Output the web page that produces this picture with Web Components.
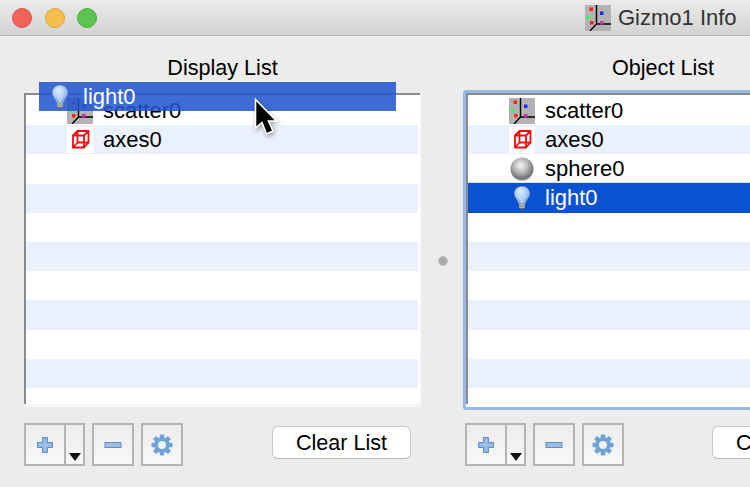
<!DOCTYPE html>
<html>
<head>
<meta charset="utf-8">
<title>Gizmo1 Info</title>
<style>
html, body { margin: 0; padding: 0; width: 750px; height: 487px; overflow: hidden; background: #ececec; }
body { font-family: "Liberation Sans", Arial, sans-serif; font-size: 21.6px; color: #000; }
</style>
</head>
<body>
<gizmo-window></gizmo-window>
<script>
const html = String.raw;

const ICONS = {
    scatter: html`<svg width="26" height="26" viewBox="0 0 26 26">
        <rect width="26" height="26" fill="#b3b3b3"/>
        <path d="M11.500 0V19H26M11.500 19L5 26" fill="none" stroke="#000" stroke-width="1.400"/>
        <rect x="4.500" y="2.500" width="3.500" height="3.500" fill="#f5241f"/>
        <rect x="1.500" y="11" width="3.500" height="3.500" fill="#3df25a"/>
        <rect x="5" y="16" width="3.500" height="3.500" fill="#f5241f"/>
        <rect x="15" y="6.500" width="3.500" height="3.500" fill="#1c2cf0"/>
        <rect x="15" y="16" width="3.500" height="3.500" fill="#c92fb4"/>
    </svg>`,
    axes: html`<svg width="26" height="26" viewBox="0 0 26 26">
        <rect width="26" height="26" fill="#fff"/>
        <path d="M6 8.500H17V20.500H6ZM10.500 4H21.500V15.500H10.500ZM6 8.500L10.500 4M17 8.500L21.500 4M17 20.500L21.500 15.500M6 20.500L10.500 15.500" fill="none" stroke="#f20d0d" stroke-width="1.800"/>
    </svg>`,
    sphere: html`<svg width="26" height="26" viewBox="0 0 26 26">
        <defs><radialGradient id="s" cx="0.45" cy="0.35" r="0.65">
            <stop offset="0" stop-color="#f6f6f6"/>
            <stop offset="0.45" stop-color="#bcbcbc"/>
            <stop offset="0.85" stop-color="#777"/>
            <stop offset="1" stop-color="#8c8c8c"/>
        </radialGradient></defs>
        <circle cx="13" cy="13" r="11.500" fill="url(#s)"/>
    </svg>`,
    light: html`<svg width="26" height="26" viewBox="0 0 26 26">
        <defs><radialGradient id="b" cx="0.4" cy="0.3" r="0.75">
            <stop offset="0" stop-color="#e4effc"/>
            <stop offset="0.6" stop-color="#a5c8f2"/>
            <stop offset="1" stop-color="#6d9fdc"/>
        </radialGradient></defs>
        <path d="M13 1.500C8.300 1.500 5.500 4.800 5.500 8.500C5.500 12 8.500 14 9.800 18.500H16.200C17.500 14 20.500 12 20.500 8.500C20.500 4.800 17.700 1.500 13 1.500Z" fill="url(#b)" stroke="#8fb4e2" stroke-width="0.600"/>
        <path d="M10.500 11L13 18M15.500 11L13 18" stroke="#d9e8fa" stroke-width="0.800" fill="none"/>
        <rect x="10" y="18.500" width="6" height="4.500" rx="1" fill="#b9bcae"/>
        <path d="M10 20H16M10 21.500H16" stroke="#85887c" stroke-width="0.600"/>
        <rect x="11.500" y="23" width="3" height="1.500" fill="#6f7167"/>
    </svg>`
};

const GLYPHS = {
    plus: html`<svg width="18" height="18" viewBox="0 0 18 18">
        <path d="M6.500 1.500H11.500V6.500H16.500V11.500H11.500V16.500H6.500V11.500H1.500V6.500H6.500Z" fill="#8fb5e0" stroke="#5f8fc8" stroke-width="1"/>
        <path d="M9 3V15M3 9H15" stroke="#a9c8ea" stroke-width="1"/>
    </svg>`,
    minus: html`<svg width="18" height="18" viewBox="0 0 18 18">
        <rect x="1" y="6.500" width="16" height="5" fill="#9dbfe6" stroke="#5f8fc8" stroke-width="1"/>
    </svg>`,
    gear: html`<svg width="22" height="22" viewBox="0 0 22 22">
        <g fill="#6ea3d8">
            <rect x="8.800" y="0.500" width="4.400" height="21" rx="0.800"/>
            <rect x="8.800" y="0.500" width="4.400" height="21" rx="0.800" transform="rotate(45 11 11)"/>
            <rect x="8.800" y="0.500" width="4.400" height="21" rx="0.800" transform="rotate(90 11 11)"/>
            <rect x="8.800" y="0.500" width="4.400" height="21" rx="0.800" transform="rotate(135 11 11)"/>
            <circle cx="11" cy="11" r="7.800"/>
        </g>
        <circle cx="11" cy="11" r="4" fill="#f0f0f0"/>
    </svg>`
};

class ObjectIcon extends HTMLElement {
    constructor() {
        super();
        const shadow = this.attachShadow({mode: 'open'});
        shadow.innerHTML = html`
            <style>
                :host { display: block; width: 26px; height: 26px; flex: none; }
                svg { display: block; }
            </style>
            ${ICONS[this.getAttribute("name")]}`;
    }
}
customElements.define('object-icon', ObjectIcon);

class ListRow extends HTMLElement {
    constructor() {
        super();
        const shadow = this.attachShadow({mode: 'open'});
        shadow.innerHTML = html`
            <style>
                :host {
                    display: flex; align-items: center; gap: 10px;
                    box-sizing: border-box; height: 29.2px;
                    padding-left: 41px; background: #fff; color: #000;
                    font-size: 22px;
                }
                :host([tint]) { background: #ebf1fc; }
                :host([selected]) {
                    background: #0b52d0; color: #fff;
                    margin-top: -1px; height: 30.2px;
                    box-shadow: 0 1px 0 #d5e2f7, 0 -1px 0 #d5e2f7;
                }
                span { line-height: 26px; }
            </style>
            <slot name="icon"></slot><span><slot></slot></span>`;
    }
}
customElements.define('list-row', ListRow);

class ObjectList extends HTMLElement {
    constructor() {
        super();
        const shadow = this.attachShadow({mode: 'open'});
        shadow.innerHTML = html`
            <style>
                :host {
                    display: block; box-sizing: border-box; height: 314px;
                    background: #f6f6f6; overflow: hidden;
                }
                :host([focused]) {
                    height: 320px; margin: -3px 0;
                    border: 3px solid #96b8ea; border-radius: 3px;
                    background: #fff;
                }
                .inner {
                    box-sizing: border-box; height: 311px; margin-right: 1px;
                    padding: 1px 2px 0 0; overflow: hidden; background: #fff;
                    border-top: 2px solid #8a8a8a; border-left: 2px solid #8a8a8a;
                }
                :host([focused]) .inner { margin: 0; padding-right: 0; }
            </style>
            <div class="inner"><slot></slot></div>`;
    }
}
customElements.define('object-list', ObjectList);

class ToolButton extends HTMLElement {
    constructor() {
        super();
        const shadow = this.attachShadow({mode: 'open'});
        const glyph = this.getAttribute("glyph");
        shadow.innerHTML = html`
            <style>
                :host {
                    display: flex; box-sizing: border-box; height: 43px;
                    width: 42px; flex: none;
                    align-items: center; justify-content: center;
                    border: 2px solid #b4b4b4;
                    background: linear-gradient(#ececec, #f8f8f8);
                }
                svg { display: block; }
            </style>
            ${GLYPHS[glyph]}`;
    }
}
customElements.define('tool-button', ToolButton);

class AddButton extends HTMLElement {
    constructor() {
        super();
        const shadow = this.attachShadow({mode: 'open'});
        shadow.innerHTML = html`
            <style>
                :host {
                    display: flex; box-sizing: border-box; height: 43px; width: 61px; flex: none;
                    border: 2px solid #b4b4b4;
                    background: linear-gradient(#ececec, #f8f8f8);
                }
                .main { width: 38px; display: flex; align-items: center; justify-content: center; border-right: 2px solid #b4b4b4; }
                .drop { flex: 1; display: flex; align-items: flex-end; justify-content: center; padding-bottom: 3px; }
                .tri { width: 0; height: 0; border: 6px solid transparent; border-top: 8px solid #111; border-bottom: 0; }
                svg { display: block; }
            </style>
            <div class="main">${GLYPHS.plus}</div>
            <div class="drop"><div class="tri"></div></div>`;
    }
}
customElements.define('add-button', AddButton);

class PushButton extends HTMLElement {
    constructor() {
        super();
        const shadow = this.attachShadow({mode: 'open'});
        shadow.innerHTML = html`
            <style>
                :host {
                    display: flex; box-sizing: border-box; width: 139px; height: 33px; flex: none;
                    align-items: center; justify-content: center;
                    background: #fff; border: 1px solid #c8c8c8; border-bottom-color: #b8b8b8;
                    border-radius: 6px; white-space: nowrap;
                }
            </style>
            <slot></slot>`;
    }
}
customElements.define('push-button', PushButton);

class ListPanel extends HTMLElement {
    constructor() {
        super();
        const shadow = this.attachShadow({mode: 'open'});
        shadow.innerHTML = html`
            <style>
                :host { display: block; width: 397px; flex: none; }
                h2 {
                    margin: 0 0 13px; font: inherit; height: 24px; line-height: 24px;
                    text-align: center; white-space: nowrap;
                }
                .tools { display: flex; align-items: flex-start; gap: 7px; margin-top: 16px; }
                push-button { margin: 3px 0 0 82px; }
                :host([right]) h2 { padding-left: 3px; }
                :host([right]) .tools { padding-left: 2px; }
                :host([right]) push-button { margin-left: 81px; }
            </style>
            <h2>${this.getAttribute("title")}</h2>
            <slot></slot>
            <div class="tools">
                <add-button></add-button>
                <tool-button glyph="minus"></tool-button>
                <tool-button glyph="gear"></tool-button>
                <push-button>Clear List</push-button>
            </div>`;
    }
}
customElements.define('list-panel', ListPanel);

class TitleBar extends HTMLElement {
    constructor() {
        super();
        const shadow = this.attachShadow({mode: 'open'});
        shadow.innerHTML = html`
            <style>
                :host {
                    display: flex; align-items: center; box-sizing: border-box;
                    height: 36px; padding: 0 0 0 12px;
                    background: linear-gradient(#ebebeb, #d3d3d3);
                    border-bottom: 1px solid #b4b4b4;
                }
                .light { width: 20px; height: 20px; box-sizing: border-box; border-radius: 50%; margin-right: 12.500px; }
                .red { background: #f0625a; border: 1px solid #dd4f48; }
                .yellow { background: #f6bd4f; border: 1px solid #dfa43a; }
                .green { background: #5cc451; border: 1px solid #4cae42; }
                .title { margin-left: auto; display: flex; align-items: center; gap: 7px; color: #333; width: 165px; flex: none; font-size: 22px; white-space: nowrap; }
            </style>
            <div class="light red"></div>
            <div class="light yellow"></div>
            <div class="light green"></div>
            <div class="title"><object-icon name="scatter"></object-icon><slot></slot></div>`;
    }
}
customElements.define('title-bar', TitleBar);

class GizmoWindow extends HTMLElement {
    constructor() {
        super();
        const shadow = this.attachShadow({mode: 'open'});
        shadow.innerHTML = html`
            <style>
                :host { display: block; position: relative; width: 750px; height: 487px; overflow: hidden; }
                .body { display: flex; padding: 20px 0 0 24px; width: 900px; }
                .split { width: 42px; flex: none; display: flex; align-items: center; justify-content: center; height: 410px; padding-left: 2px; box-sizing: border-box; }
                .dot { width: 10px; height: 10px; border-radius: 50%; background: #a9a9a9; border: 1px solid #c4c4c4; box-sizing: border-box; }
                .ghost {
                    position: absolute; left: 39px; top: 82px; width: 357px; height: 29px;
                    display: flex; align-items: center; gap: 10px; padding-left: 8px; box-sizing: border-box;
                    background: rgba(33, 85, 207, .87); color: #fff; font-size: 22px;
                }
                .cursor { position: absolute; left: 254px; top: 98px; filter: drop-shadow(1px 2px 2px rgba(0,0,0,.35)); }
            </style>
            <title-bar>Gizmo1 Info</title-bar>
            <div class="body">
                <list-panel title="Display List">
                    <object-list>
                        <list-row><object-icon slot="icon" name="scatter"></object-icon>scatter0</list-row>
                        <list-row tint><object-icon slot="icon" name="axes"></object-icon>axes0</list-row>
                        <list-row></list-row><list-row tint></list-row><list-row></list-row><list-row tint></list-row>
                        <list-row></list-row><list-row tint></list-row><list-row></list-row><list-row tint></list-row>
                        <list-row></list-row>
                    </object-list>
                </list-panel>
                <div class="split"><div class="dot"></div></div>
                <list-panel title="Object List" right>
                    <object-list focused>
                        <list-row><object-icon slot="icon" name="scatter"></object-icon>scatter0</list-row>
                        <list-row tint><object-icon slot="icon" name="axes"></object-icon>axes0</list-row>
                        <list-row><object-icon slot="icon" name="sphere"></object-icon>sphere0</list-row>
                        <list-row selected><object-icon slot="icon" name="light"></object-icon>light0</list-row>
                        <list-row></list-row><list-row tint></list-row>
                        <list-row></list-row><list-row tint></list-row><list-row></list-row><list-row tint></list-row>
                        <list-row></list-row>
                    </object-list>
                </list-panel>
            </div>
            <div class="ghost"><object-icon name="light"></object-icon>light0</div>
            <svg class="cursor" width="28" height="44" viewBox="0 0 28 44">
                <path d="M1.500 1.500V30L8 24.500L12.500 36L19 33L14.500 23H22.500Z" fill="#000" stroke="#fff" stroke-width="1.600"/>
            </svg>`;
    }
}
customElements.define('gizmo-window', GizmoWindow);
</script>
</body>
</html>
